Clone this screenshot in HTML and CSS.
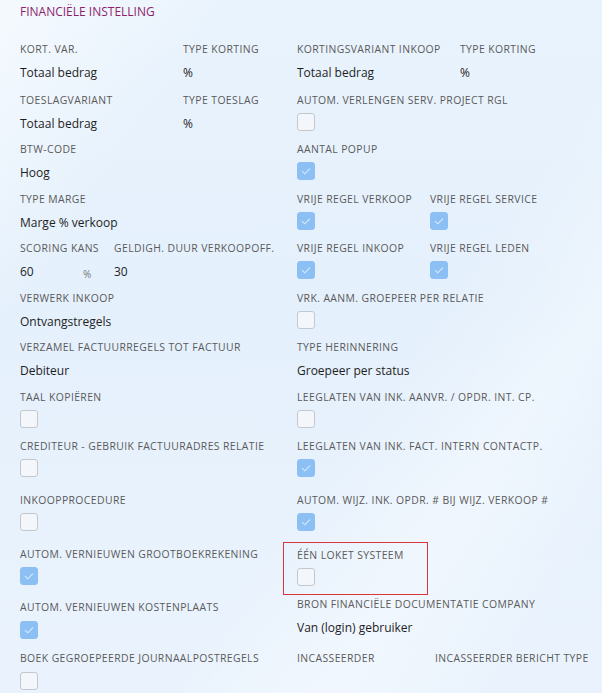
FILE: index.html
```html
<!DOCTYPE html>
<html>
<head>
<meta charset="utf-8">
<link rel="stylesheet" href="styles.css">
</head>
<body>
<div class="page">
  <h1 class="title">FINANCIËLE INSTELLING</h1>
  <div class="grid">
    <!-- row 1 -->
    <div class="row h51">
      <div class="half">
        <div class="field w163"><div class="lbl">KORT. VAR.</div><div class="val">Totaal bedrag</div></div>
        <div class="field"><div class="lbl">TYPE KORTING</div><div class="val">%</div></div>
      </div>
      <div class="half">
        <div class="field w163"><div class="lbl">KORTINGSVARIANT INKOOP</div><div class="val">Totaal bedrag</div></div>
        <div class="field"><div class="lbl">TYPE KORTING</div><div class="val">%</div></div>
      </div>
    </div>
    <!-- row 2 -->
    <div class="row h49">
      <div class="half">
        <div class="field w163"><div class="lbl">TOESLAGVARIANT</div><div class="val">Totaal bedrag</div></div>
        <div class="field"><div class="lbl">TYPE TOESLAG</div><div class="val">%</div></div>
      </div>
      <div class="half">
        <div class="field"><div class="lbl">AUTOM. VERLENGEN SERV. PROJECT RGL</div><div class="cb"></div></div>
      </div>
    </div>
    <!-- row 3 -->
    <div class="row h50">
      <div class="half">
        <div class="field"><div class="lbl">BTW-CODE</div><div class="val">Hoog</div></div>
      </div>
      <div class="half">
        <div class="field"><div class="lbl">AANTAL POPUP</div><div class="cb on"><svg viewBox="0 0 18 18"><path d="M4.5 9.2 L7.6 12.2 L13.4 6.2"/></svg></div></div>
      </div>
    </div>
    <!-- row 4 -->
    <div class="row h49">
      <div class="half">
        <div class="field"><div class="lbl">TYPE MARGE</div><div class="val">Marge % verkoop</div></div>
      </div>
      <div class="half">
        <div class="field w133"><div class="lbl">VRIJE REGEL VERKOOP</div><div class="cb on"><svg viewBox="0 0 18 18"><path d="M4.5 9.2 L7.6 12.2 L13.4 6.2"/></svg></div></div>
        <div class="field"><div class="lbl">VRIJE REGEL SERVICE</div><div class="cb on"><svg viewBox="0 0 18 18"><path d="M4.5 9.2 L7.6 12.2 L13.4 6.2"/></svg></div></div>
      </div>
    </div>
    <!-- row 5 -->
    <div class="row h50">
      <div class="half">
        <div class="field w94"><div class="lbl">SCORING KANS</div><div class="val pct-row"><span>60</span><span class="pct">%</span></div></div>
        <div class="field"><div class="lbl">GELDIGH. DUUR VERKOOPOFF.</div><div class="val">30</div></div>
      </div>
      <div class="half">
        <div class="field w133"><div class="lbl">VRIJE REGEL INKOOP</div><div class="cb on"><svg viewBox="0 0 18 18"><path d="M4.5 9.2 L7.6 12.2 L13.4 6.2"/></svg></div></div>
        <div class="field"><div class="lbl">VRIJE REGEL LEDEN</div><div class="cb on"><svg viewBox="0 0 18 18"><path d="M4.5 9.2 L7.6 12.2 L13.4 6.2"/></svg></div></div>
      </div>
    </div>
    <!-- row 6 -->
    <div class="row h49">
      <div class="half">
        <div class="field"><div class="lbl">VERWERK INKOOP</div><div class="val">Ontvangstregels</div></div>
      </div>
      <div class="half">
        <div class="field"><div class="lbl">VRK. AANM. GROEPEER PER RELATIE</div><div class="cb"></div></div>
      </div>
    </div>
    <!-- row 7 -->
    <div class="row h50">
      <div class="half">
        <div class="field"><div class="lbl">VERZAMEL FACTUURREGELS TOT FACTUUR</div><div class="val">Debiteur</div></div>
      </div>
      <div class="half">
        <div class="field"><div class="lbl">TYPE HERINNERING</div><div class="val">Groepeer per status</div></div>
      </div>
    </div>
    <!-- row 8 -->
    <div class="row h49">
      <div class="half">
        <div class="field"><div class="lbl">TAAL KOPIËREN</div><div class="cb"></div></div>
      </div>
      <div class="half">
        <div class="field"><div class="lbl">LEEGLATEN VAN INK. AANVR. / OPDR. INT. CP.</div><div class="cb"></div></div>
      </div>
    </div>
    <!-- row 9 -->
    <div class="row h54">
      <div class="half">
        <div class="field"><div class="lbl">CREDITEUR - GEBRUIK FACTUURADRES RELATIE</div><div class="cb"></div></div>
      </div>
      <div class="half">
        <div class="field"><div class="lbl">LEEGLATEN VAN INK. FACT. INTERN CONTACTP.</div><div class="cb on"><svg viewBox="0 0 18 18"><path d="M4.5 9.2 L7.6 12.2 L13.4 6.2"/></svg></div></div>
      </div>
    </div>
    <!-- row 10 -->
    <div class="row h54">
      <div class="half">
        <div class="field"><div class="lbl">INKOOPPROCEDURE</div><div class="cb"></div></div>
      </div>
      <div class="half">
        <div class="field"><div class="lbl">AUTOM. WIJZ. INK. OPDR. # BIJ WIJZ. VERKOOP #</div><div class="cb on"><svg viewBox="0 0 18 18"><path d="M4.5 9.2 L7.6 12.2 L13.4 6.2"/></svg></div></div>
      </div>
    </div>
    <!-- row 11 -->
    <div class="row h53">
      <div class="half">
        <div class="field"><div class="lbl">AUTOM. VERNIEUWEN GROOTBOEKREKENING</div><div class="cb on"><svg viewBox="0 0 18 18"><path d="M4.5 9.2 L7.6 12.2 L13.4 6.2"/></svg></div></div>
      </div>
      <div class="half">
        <div class="field error"><div class="lbl">ÉÉN LOKET SYSTEEM</div><div class="cb"></div></div>
      </div>
    </div>
    <!-- row 12 -->
    <div class="row h51">
      <div class="half">
        <div class="field"><div class="lbl">AUTOM. VERNIEUWEN KOSTENPLAATS</div><div class="cb cb-tight on"><svg viewBox="0 0 18 18"><path d="M4.5 9.2 L7.6 12.2 L13.4 6.2"/></svg></div></div>
      </div>
      <div class="half">
        <div class="field up3"><div class="lbl">BRON FINANCIËLE DOCUMENTATIE COMPANY</div><div class="val">Van (login) gebruiker</div></div>
      </div>
    </div>
    <!-- row 13 -->
    <div class="row h50">
      <div class="half">
        <div class="field"><div class="lbl">BOEK GEGROEPEERDE JOURNAALPOSTREGELS</div><div class="cb cb-tight"></div></div>
      </div>
      <div class="half">
        <div class="field w138"><div class="lbl">INCASSEERDER</div></div>
        <div class="field"><div class="lbl">INCASSEERDER BERICHT TYPE</div></div>
      </div>
    </div>
  </div>
</div>
</body>
</html>
```

FILE: styles.css
```css
html, body {
  margin: 0;
  padding: 0;
}
body {
  width: 602px;
  height: 693px;
  overflow: hidden;
  font-family: "Open Sans", "Liberation Sans", sans-serif;
  background:
    linear-gradient(125deg, rgba(255,255,255,0.55) 0%, rgba(255,255,255,0) 22%, rgba(255,255,255,0) 60%, rgba(255,255,255,0.35) 75%, rgba(255,255,255,0) 90%),
    linear-gradient(180deg, #e9f3fd 0%, #e4f0fc 45%, #e8f2fd 75%, #eaf3fd 100%);
}
.page {
  padding: 0 0 0 20px;
}
.title {
  margin: 0;
  padding-top: 5px;
  height: 37px;
  font-size: 12px;
  font-weight: 400;
  line-height: 14px;
  color: #8e1f6c;
  letter-spacing: 0;
}
.row {
  display: flex;
}
.h49 { height: 49px; }
.h50 { height: 50px; }
.h51 { height: 51px; }
.h53 { height: 53px; }
.h54 { height: 54px; }
.half {
  display: flex;
  width: 277px;
  flex-shrink: 0;
}
.field {
  display: flex;
  flex-direction: column;
  flex-shrink: 0;
}
.w163 { width: 163px; }
.w133 { width: 133px; }
.w94 { width: 94px; }
.w138 { width: 138px; }
.lbl {
  font-size: 10.4px;
  line-height: 14px;
  color: #5a5a5a;
  white-space: nowrap;
  letter-spacing: 0.4px;
}
.val {
  margin-top: 9px;
  font-size: 12px;
  line-height: 16px;
  color: #1e1e1e;
  white-space: nowrap;
}
.pct-row {
  display: flex;
  width: 94px;
}
.pct-row span:first-child {
  width: 63px;
}
.pct {
  font-size: 10px;
  color: #777;
  padding-top: 2px;
}
.cb {
  margin-top: 6px;
  width: 16px;
  height: 16px;
  border: 1px solid #c4c8cc;
  border-radius: 3px;
  background: #f3f6fa;
}
.cb-tight { margin-top: 7px; }
.cb.on {
  background: #8cc0f5;
  border-color: #8cc0f5;
}
.cb svg {
  display: block;
  width: 16px;
  height: 16px;
  margin: 0;
}
.cb svg path {
  fill: none;
  stroke: #d8e9fb;
  stroke-width: 1.2;
}
.field.error {
  margin: -5px 0 0 -14px;
  padding: 5px 0 0 13px;
  width: 130px;
  height: 46px;
  border: 1px solid #d9363e;
}
.up3 { margin-top: -3px; }
```
